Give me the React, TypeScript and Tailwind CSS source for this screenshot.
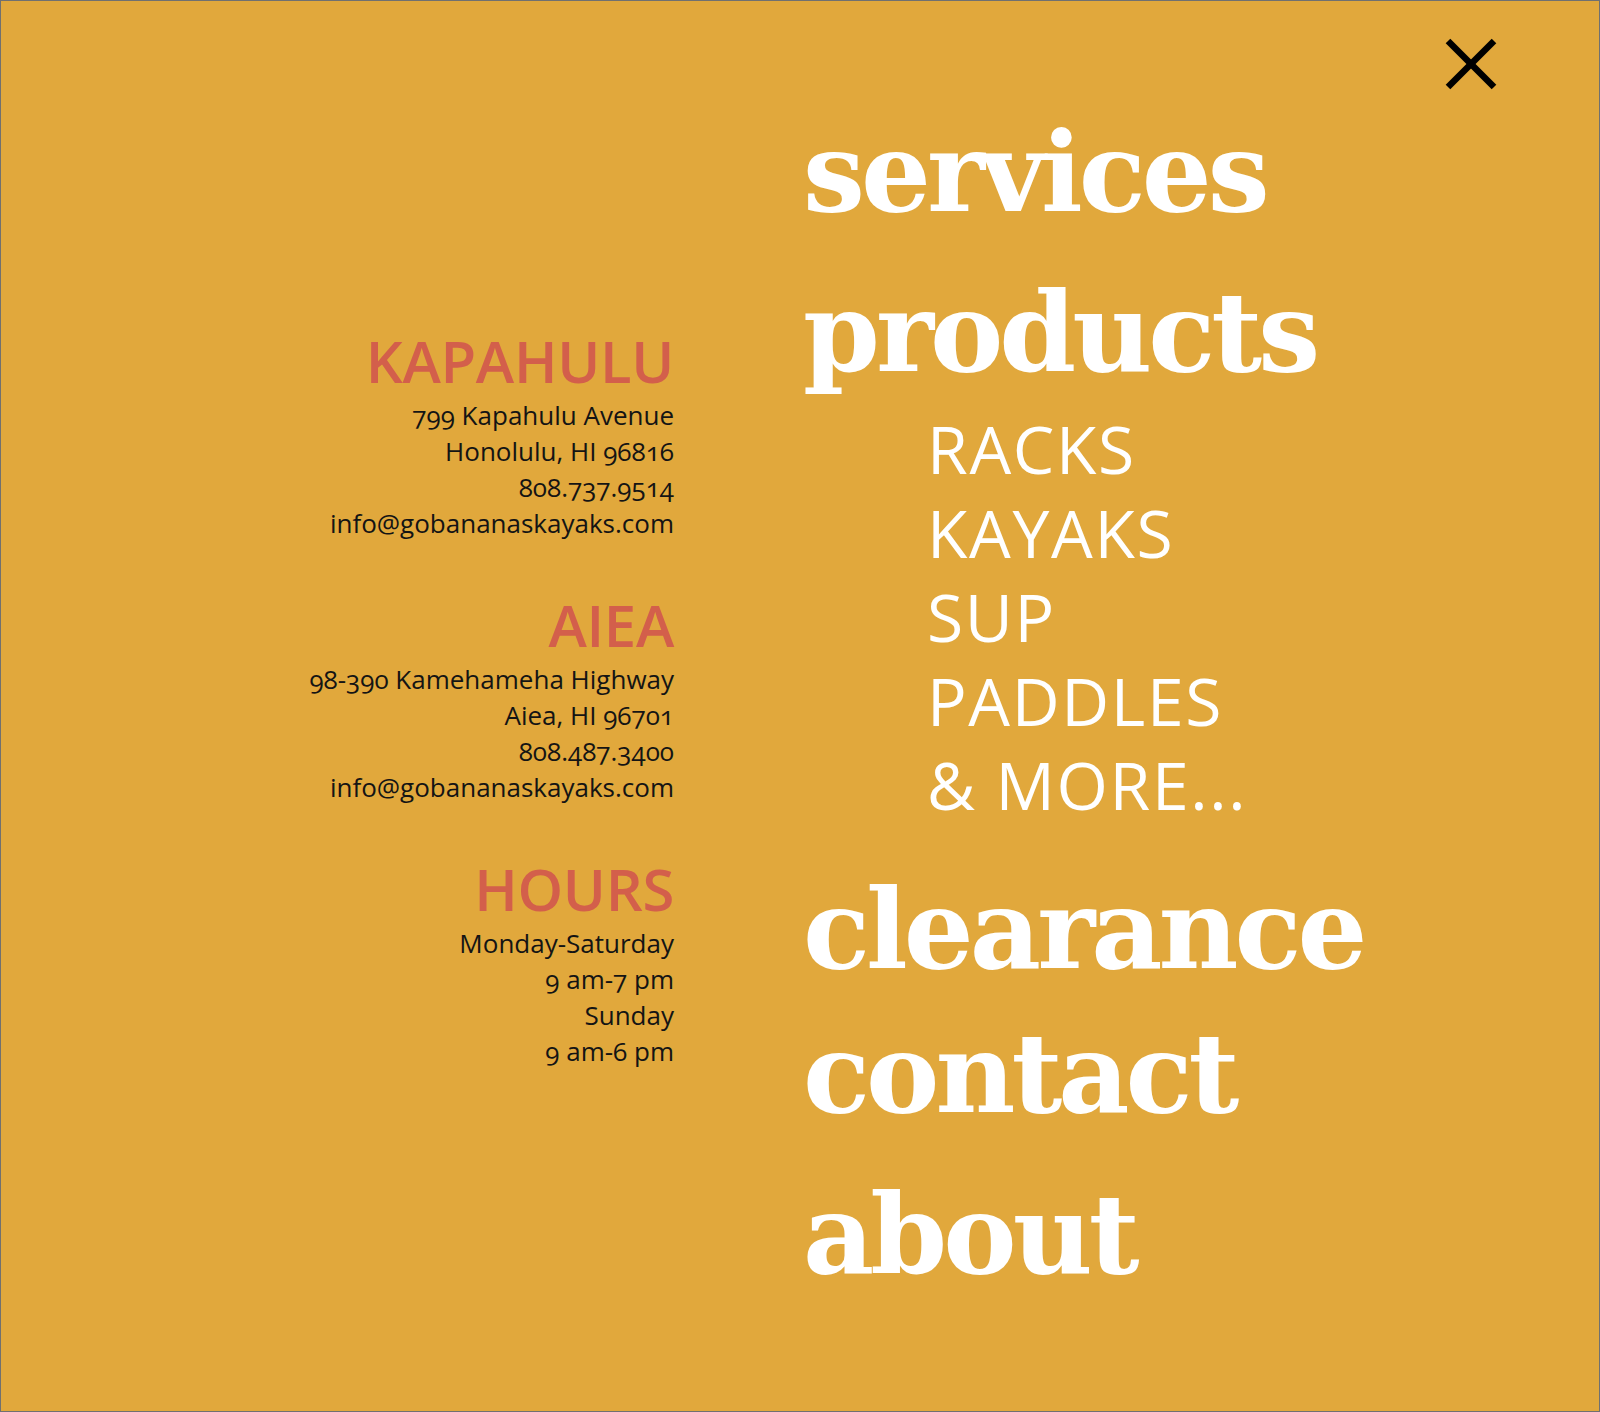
const locations = [
  {
    name: 'KAPAHULU',
    lines: ['799 Kapahulu Avenue', 'Honolulu, HI 96816', '808.737.9514', 'info@gobananaskayaks.com'],
  },
  {
    name: 'AIEA',
    lines: ['98-390 Kamehameha Highway', 'Aiea, HI 96701', '808.487.3400', 'info@gobananaskayaks.com'],
  },
  {
    name: 'HOURS',
    lines: ['Monday-Saturday', '9 am-7 pm', 'Sunday', '9 am-6 pm'],
  },
];

const productLinks = ['RACKS', 'KAYAKS', 'SUP', 'PADDLES', '& MORE...'];

const serif = "font-['DejaVu_Serif','Liberation_Serif',serif]";
const sans = "font-['Open_Sans','Noto_Sans',sans-serif]";

function NavLink({ label, className }: { label: string; className: string }) {
  return (
    <a
      href="#"
      className={`block ${serif} font-bold text-white text-[110px] leading-[128px] tracking-[-0.036em] ${className}`}
    >
      {label}
    </a>
  );
}

export default function App() {
  return (
    <div className="w-full h-[1412px] bg-[#e1a83c] border border-[#707070] flex">
      <aside className={`w-[673px] shrink-0 pt-[336px] text-right ${sans}`}>
        {locations.map((loc) => (
          <div key={loc.name} className="mb-[60px]">
            <h2 className="text-[58px] leading-[48px] font-semibold text-[#d35f4b] tracking-[-0.005em]">
              {loc.name}
            </h2>
            <div className="mt-[12px] text-[26px] leading-[36px] text-[#141414] oldstyle-nums">
              {loc.lines.map((line) => (
                <p key={line}>{line}</p>
              ))}
            </div>
          </div>
        ))}
      </aside>

      <nav className="ml-[129px] flex-1 pt-[108px]">
        <NavLink label="services" className="" />
        <NavLink label="products" className="mt-[32px]" />
        <ul className={`mt-[9px] pl-[124px] ${sans}`}>
          {productLinks.map((item) => (
            <li key={item}>
              <a href="#" className="block text-[66px] leading-[84px] tracking-[0.025em] text-white">
                {item}
              </a>
            </li>
          ))}
        </ul>
        <NavLink label="clearance" className="mt-[40px]" />
        <NavLink label="contact" className="mt-[16px]" />
        <NavLink label="about" className="mt-[33px]" />
      </nav>

      <div className="self-start mt-[37px] mr-[102px]">
        <button className="block text-black" aria-label="Close menu">
          <svg width="52" height="52" viewBox="0 0 52 52" fill="none" stroke="currentColor" strokeWidth="6.5">
            <line x1="3" y1="3" x2="49" y2="49" />
            <line x1="49" y1="3" x2="3" y2="49" />
          </svg>
        </button>
      </div>
    </div>
  );
}
